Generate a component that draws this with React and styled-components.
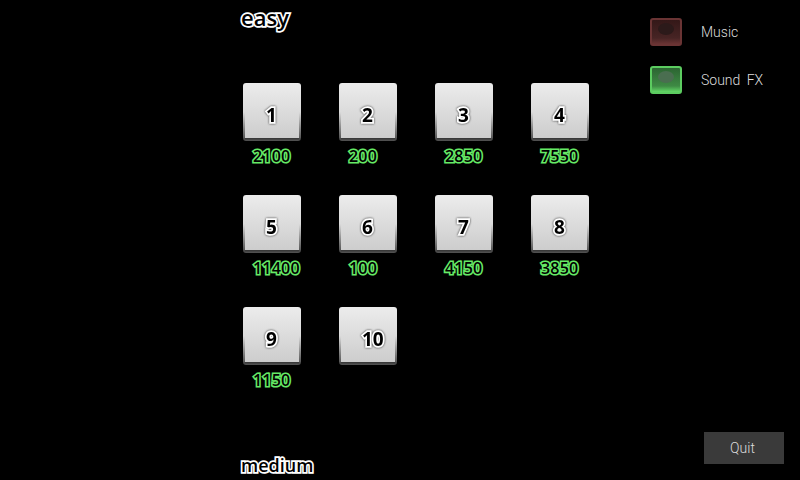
import React from 'react';
import styled, { createGlobalStyle } from 'styled-components';

const GlobalStyle = createGlobalStyle`
    html, body {
        margin: 0;
        background: #000;
        font-family: "Roboto", Arial, sans-serif;
    }
`;

const Screen = styled.div`
    display: flex;
    width: 800px;
    height: 480px;
    overflow: hidden;
    background: #000;
`;

const Levels = styled.div`
    display: flex;
    flex-direction: column;
    width: 410px;
    margin-left: 240px;
`;

const Heading = styled.h2`
    margin: 0;
    height: 43px;
    flex-shrink: 0;
    box-sizing: border-box;
    padding: ${(p) => p.$top}px 0 0 1px;
    font-family: "Open Sans", sans-serif;
    font-size: ${(p) => p.$size}px;
    line-height: 22px;
    font-weight: 600;
    color: #000;
    -webkit-text-stroke: 3.4px #fff;
    paint-order: stroke fill;
`;

const LevelGrid = styled.div`
    display: grid;
    grid-template-columns: repeat(4, 96px);
    grid-auto-rows: 112px;
    height: 411px;
    padding-top: 40px;
    padding-left: 3px;
    box-sizing: border-box;
    flex-shrink: 0;
`;

const Level = styled.div`
    display: flex;
    flex-direction: column;
`;

const LevelButton = styled.div`
    display: flex;
    align-items: center;
    width: 58px;
    height: 58px;
    box-sizing: border-box;
    padding: 6px 0 0 23px;
    border-radius: 3px;
    background:
        linear-gradient(to bottom, transparent 50%, #4a4a4a 100%) left top / 2px 100% no-repeat,
        linear-gradient(to bottom, transparent 50%, #4a4a4a 100%) right top / 2px 100% no-repeat,
        linear-gradient(to bottom, #333, #555) left bottom / 100% 3px no-repeat,
        linear-gradient(to bottom, #ececec 0%, #cbcbcb 100%);
`;

const LevelNumber = styled.span`
    font-family: "Open Sans", sans-serif;
    font-size: 19px;
    font-weight: 700;
    color: #000;
    -webkit-text-stroke: 3.4px #fff;
    paint-order: stroke fill;
    filter: drop-shadow(0 0 1px #333);
`;

const Score = styled.div`
    margin-top: 6px;
    padding-left: 10px;
    font-family: "Open Sans", sans-serif;
    font-size: 16px;
    line-height: 18px;
    font-weight: 600;
    letter-spacing: 0.2px;
    color: #000;
    -webkit-text-stroke: 3.2px #66ea66;
    paint-order: stroke fill;
`;

const Sidebar = styled.div`
    display: flex;
    flex-direction: column;
    flex: 1;
    padding: 18px 16px 16px 0;
`;

const Toggle = styled.div`
    display: flex;
    align-items: center;
    gap: 19px;
    height: 28px;
    margin-bottom: 20px;
    color: #dcdcdc;
    font-size: 14px;
    font-weight: 300;
    word-spacing: 3px;
`;

const Lamp = styled.div`
    display: flex;
    justify-content: center;
    width: 32px;
    height: 28px;
    box-sizing: border-box;
    padding-top: 3px;
    border-radius: 3px;
    border: 2px solid ${(p) => (p.$on ? '#5ccc60' : '#6a3434')};
    background: ${(p) =>
        p.$on
            ? 'linear-gradient(to bottom, #2c6432, #3e8a44 75%, #62d866 100%)'
            : 'linear-gradient(to bottom, #341818, #472424 75%, #6a3434 100%)'};
`;

const LampDot = styled.div`
    width: 16px;
    height: 12px;
    border-radius: 50%;
    background: ${(p) => (p.$on ? '#4a6e50' : '#2c1a1a')};
`;

const QuitButton = styled.div`
    display: flex;
    align-items: center;
    justify-content: center;
    width: 80px;
    height: 32px;
    box-sizing: border-box;
    padding-right: 3px;
    margin-top: auto;
    margin-left: 54px;
    background: #3a3a3a;
    color: #dcdcdc;
    font-size: 14px;
    font-weight: 300;
`;

const levels = [
    { n: 1, score: 2100 },
    { n: 2, score: 200 },
    { n: 3, score: 2850 },
    { n: 4, score: 7550 },
    { n: 5, score: 11400 },
    { n: 6, score: 100 },
    { n: 7, score: 4150 },
    { n: 8, score: 3850 },
    { n: 9, score: 1150 },
    { n: 10 },
];

const App = () => {
    return (
        <Screen>
            <GlobalStyle />
            <Levels>
                <Heading $size={22} $top={6}>easy</Heading>
                <LevelGrid>
                    {levels.map((l) => (
                        <Level key={l.n}>
                            <LevelButton>
                                <LevelNumber>{l.n}</LevelNumber>
                            </LevelButton>
                            {l.score && <Score>{l.score}</Score>}
                        </Level>
                    ))}
                </LevelGrid>
                <Heading $size={18} $top={0}>medium</Heading>
            </Levels>
            <Sidebar>
                <Toggle>
                    <Lamp><LampDot /></Lamp>
                    Music
                </Toggle>
                <Toggle>
                    <Lamp $on><LampDot $on /></Lamp>
                    Sound FX
                </Toggle>
                <QuitButton>Quit</QuitButton>
            </Sidebar>
        </Screen>
    );
};

export default App;
